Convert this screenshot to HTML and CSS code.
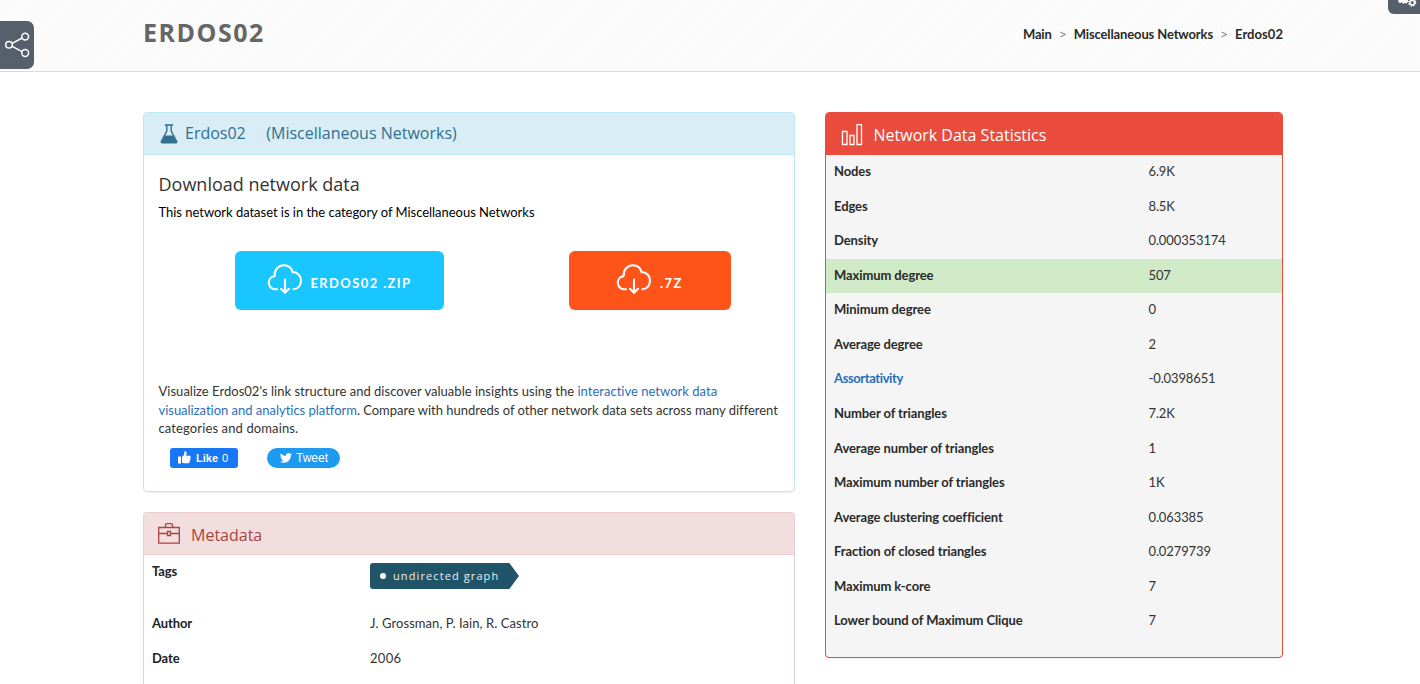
FILE: index.html
```
<!DOCTYPE html>
<html lang="en">
<head>
<meta charset="utf-8">
<title>Erdos02 | Miscellaneous Networks</title>
<link rel="stylesheet" href="styles.css">
</head>
<body>
<svg class="defs" width="0" height="0" aria-hidden="true">
  <symbol id="cloud" viewBox="0 0 36 32">
    <path d="M10 26.300H8.500C4.800 26.300 1.800 23.500 1.800 19.600C1.800 16 4.300 13.400 7.600 13.100C7.300 6.700 11.400 2.200 16.800 2.200C21.200 2.200 24.600 5 25.600 9.300C30.400 8.800 34 12.700 34 17.500C34 22.300 31.200 26.300 26.500 26.300" />
    <path d="M18 16.500V29M14 25.800L18 29.800L22 25.800" />
  </symbol>
</svg>

<header class="top">
  <div class="container top-row">
    <h1>ERDOS02</h1>
    <nav class="crumbs">
      <a>Main</a><i>&gt;</i><a>Miscellaneous Networks</a><i>&gt;</i><a class="here">Erdos02</a>
    </nav>
  </div>
</header>

<div class="share">
  <svg width="27" height="27" viewBox="0 0 27 27"><path d="M8.200 11.300L18.200 6M8.200 14.300L18.200 19.600"/><circle cx="5" cy="12.800" r="3.300"/><circle cx="21.200" cy="4.600" r="3.400"/><circle cx="21.200" cy="21" r="3.400"/></svg>
</div>
<div class="gear">
  <svg width="20" height="8" viewBox="0 0 20 8"><path class="fill" d="M0 0H10V1.500L8.500 3.800L7 2.800L5.500 4L3.800 2.300L2 3.300L.5 2Z"/><circle class="teeth" cx="14.200" cy="2.600" r="3.300"/><circle class="ring" cx="14.200" cy="2.600" r="2.300"/></svg>
</div>

<main class="container columns">
  <div class="left">
    <section class="card info">
      <h2 class="head">
        <svg width="18" height="20" viewBox="0 0 18 20"><path class="glass" d="M4.800 1H13.200M6.800 1V7L1.400 17.200Q.7 18.800 2.400 18.800H15.600Q17.300 18.800 16.600 17.200L11.200 7V1"/><path class="liquid" d="M4.800 11.500H13.200L17 18.700H1Z"/></svg>
        <span class="h-name">Erdos02</span><span class="h-cat">(Miscellaneous Networks)</span>
      </h2>
      <div class="body">
        <h3>Download network data</h3>
        <p class="lead">This network dataset is in the category of Miscellaneous Networks</p>
        <div class="buttons">
          <a class="btn zip"><svg width="36" height="32"><use href="#cloud"/></svg><span>ERDOS02 .ZIP</span></a>
          <a class="btn seven"><svg width="36" height="32"><use href="#cloud"/></svg><span>.7Z</span></a>
        </div>
        <div class="about">
          <div class="l1">Visualize Erdos02's link structure and discover valuable insights using the <a>interactive network data</a></div>
          <div class="l2"><a>visualization and analytics platform</a>. Compare with hundreds of other network data sets across many different</div>
          <div class="l3">categories and domains.</div>
        </div>
        <div class="social">
          <a class="like"><svg width="13" height="13" viewBox="0 0 13 13"><path d="M0 5.500H3V12.500H0ZM4 5.800C6 4.600 6.300 3 6.300 1.200C6.400-.2 8.600 0 8.600 2.200C8.600 3.300 8.300 4.200 8.100 4.800H11.500C12.800 4.800 13 6.300 12.200 6.900C12.900 7.500 12.800 8.500 12 8.900C12.400 9.600 12.200 10.400 11.400 10.700C11.600 11.800 11 12.300 10 12.300H7C5.500 12.300 4.800 11.800 4 11.500Z"/></svg><b>Like</b><span>0</span></a>
          <a class="tweet"><svg width="12" height="12" viewBox="0 0 24 24"><path d="M24 4.600a10 10 0 0 1-2.800.8 5 5 0 0 0 2.100-2.700 10 10 0 0 1-3.100 1.200 4.900 4.900 0 0 0-8.400 4.500A14 14 0 0 1 1.700 3.200a4.900 4.900 0 0 0 1.500 6.500A5 5 0 0 1 1 9.100a4.900 4.900 0 0 0 3.900 4.900 5 5 0 0 1-2.200.1 4.900 4.900 0 0 0 4.600 3.400A10 10 0 0 1 0 19.500 14 14 0 0 0 7.500 21.700c9.100 0 14.300-7.700 14-14.600A10 10 0 0 0 24 4.600z"/></svg><span>Tweet</span></a>
        </div>
      </div>
    </section>

    <section class="card meta">
      <h2 class="head">
        <svg width="22" height="21" viewBox="0 0 22 21"><path d="M.7 4.500H21.300V20.200H.7ZM7.500 4.300V1.700Q7.500.7 8.500.7H13.500Q14.500.7 14.500 1.700V4.300M.7 10.500H9.300M12.700 10.500H21.300M9.500 8.500H12.500V12.500H9.500Z"/></svg>
        <span>Metadata</span>
      </h2>
      <div class="mrow tags"><b>Tags</b><span class="tag">undirected graph</span></div>
      <div class="mrow"><b>Author</b><span class="author">J. Grossman, P. Iain, R. Castro</span></div>
      <div class="mrow"><b>Date</b><span class="year">2006</span></div>
    </section>
  </div>

  <section class="card stats">
    <h2 class="head">
      <svg width="22" height="22" viewBox="0 0 22 22"><path d="M1.500 7.500H6V20.500H1.500ZM9 11.500H13V20.500H9ZM16 .7H20.500V20.500H16Z"/></svg>
      <span>Network Data Statistics</span>
    </h2>
    <div class="row"><b>Nodes</b><span>6.9K</span></div>
    <div class="row"><b>Edges</b><span>8.5K</span></div>
    <div class="row"><b>Density</b><span>0.000353174</span></div>
    <div class="row on"><b>Maximum degree</b><span>507</span></div>
    <div class="row"><b>Minimum degree</b><span>0</span></div>
    <div class="row"><b>Average degree</b><span>2</span></div>
    <div class="row"><b class="link">Assortativity</b><span>-0.0398651</span></div>
    <div class="row"><b>Number of triangles</b><span>7.2K</span></div>
    <div class="row"><b>Average number of triangles</b><span>1</span></div>
    <div class="row"><b>Maximum number of triangles</b><span>1K</span></div>
    <div class="row"><b>Average clustering coefficient</b><span>0.063385</span></div>
    <div class="row"><b>Fraction of closed triangles</b><span>0.0279739</span></div>
    <div class="row"><b>Maximum k-core</b><span>7</span></div>
    <div class="row"><b>Lower bound of Maximum Clique</b><span>7</span></div>
  </section>
</main>
</body>
</html>
```
FILE: styles.css
```
* { box-sizing: border-box; }
html, body { height: 100%; overflow: hidden; }
body { margin: 0; background: #fff; color: #333; font-family: Lato, "Liberation Sans", sans-serif; font-size: 13px; line-height: 18.57px; }
svg { fill: none; flex: none; }
h1, h2, h3, p { margin: 0; font-family: "Open Sans", sans-serif; font-weight: 400; }
b { font-weight: 700; }
.defs { position: absolute; }
.container { width: 1140px; margin-left: 143px; }

.top { height: 72px; border-bottom: 1px solid #dcdcdc; background: repeating-linear-gradient(135deg, #fafafa 0 1.500px, #fcfcfc 1.500px 4px); }
.top-row { display: flex; justify-content: space-between; height: 68px; align-items: center; }
h1 { font-size: 25px; font-weight: 700; color: #666; letter-spacing: 1.500px; padding-bottom: 3px; }
.crumbs { display: flex; color: #2a2a2a; font-weight: 700; letter-spacing: -.13px; }
.crumbs .here { letter-spacing: .05px; }
.crumbs i { font-style: normal; font-weight: 400; font-size: 14px; color: #888; width: 22px; text-align: center; }

.share { position: absolute; left: 0; top: 21px; width: 34px; height: 48px; background: #575f6a; border-radius: 0 7px 7px 0; padding: 11px 0 0 4px; }
.share svg { stroke: #fff; stroke-width: 1.500; }
.gear { position: absolute; right: 0; top: 0; width: 32px; height: 14px; background: #575f6a; border-radius: 0 0 0 6px; padding-left: 10px; line-height: 0; }
.gear .fill { fill: #fff; }
.gear .teeth { stroke: #fff; stroke-width: 1.500; stroke-dasharray: 1.500 1.100; }
.gear .ring { stroke: #fff; stroke-width: 1.500; }

.columns { display: flex; gap: 30px; align-items: flex-start; padding-top: 40px; height: 612px; }
.left { width: 652px; height: 572px; display: flex; flex-direction: column; gap: 20px; }
.card { border: 1px solid; border-radius: 4px; box-shadow: 0 1px 1px rgba(0,0,0,.05); }
.head { display: flex; align-items: center; font-size: 16px; border-bottom: 1px solid; height: 42px; border-radius: 3px 3px 0 0; }
.info { border-color: #bce8f1; height: 380px; }
.info .head { background: #d9edf7; border-color: #bce8f1; color: #31708f; padding-left: 15.500px; }
.h-name { margin-left: 7.500px; }
.h-cat { margin-left: 20.500px; }
.glass { stroke: #31708f; stroke-width: 1.400; }
.liquid { fill: #31708f; }
.body { padding: 16px 15px 0 14.500px; }
h3 { font-size: 18px; line-height: 26px; }
.lead { font: 13px/18px Lato, sans-serif; color: #000; margin-top: 6px; letter-spacing: -.03px; }
.buttons { display: flex; padding: 30px 0 0 76.500px; gap: 125px; }
.btn { display: flex; height: 59px; border-radius: 6px; color: #fff; font-weight: 700; padding-top: 12px; }
.btn svg { stroke: #fff; stroke-width: 2.100; stroke-linecap: round; stroke-linejoin: round; }
.btn span { margin-left: 8px; padding-top: 11px; letter-spacing: 1.380px; }
.zip { width: 209px; background: #1ac6ff; padding-left: 31.500px; }
.seven { width: 162px; background: #ff5419; padding-left: 47px; }
.about { margin-top: 72px; white-space: nowrap; }
.about a { color: #2a6ebb; }
.l1 { letter-spacing: .020px; }
.l2 { letter-spacing: -.020px; }
.l3 { letter-spacing: .120px; }
.social { display: flex; padding: 10px 0 0 11.500px; gap: 29px; font: 12px/20px "Liberation Sans", Arial, sans-serif; color: #fff; }
.like { display: flex; align-items: center; width: 68px; height: 20px; background: #1877f2; border-radius: 3px; padding-left: 8px; font-size: 11px; }
.like svg, .tweet svg { fill: #fff; }
.like b { margin: 0 4px 0 5px; }
.tweet { display: flex; align-items: center; width: 73px; height: 20px; background: #1d9bf0; border-radius: 10px; padding-left: 13px; }
.tweet span { margin-left: 4px; }

.meta { border-color: #ebccd1; height: 172px; border-bottom: 0; border-radius: 4px 4px 0 0; box-shadow: none; }
.meta .head { background: #f2dede; border-color: #ebccd1; color: #a94442; padding: 0 0 0 14px; }
.meta .head svg { stroke: #a94442; stroke-width: 1.300; }
.meta .head span { margin-left: 11px; padding-top: 3px; }
.mrow { display: flex; padding: 7px 8px; height: 34.570px; }
.mrow b { width: 218px; color: #222; letter-spacing: -.1px; }
.tags { height: 52px; }
.tag { width: 149px; height: 26px; margin-top: 1px; background: #205468; border-radius: 3px 0 0 3px; clip-path: polygon(0 0, 93.500% 0, 100% 50%, 93.500% 100%, 0 100%); display: flex; align-items: center; gap: 7px; padding-left: 10px; color: #eee; font: 11px/20px "Open Sans", sans-serif; letter-spacing: 1.100px; }
.tag::before { content: ""; width: 6px; height: 6px; border-radius: 50%; background: #fff; }
.author { letter-spacing: .070px; }
.year { letter-spacing: .3px; }

.stats { width: 458px; height: 546px; border-color: #e74c3c; background: #f5f5f5; }
.stats .head { background: #e94c3d; border-color: #e94c3d; color: #fff; padding: 2px 0 0 14.500px; }
.stats .head svg { stroke: #fff; stroke-width: 1.300; }
.stats .head span { margin-left: 11px; padding-top: 2px; }
.row { display: flex; height: 34.570px; padding: 7px 8px; }
.row b { width: 314.500px; color: #2a2a2a; letter-spacing: -.1px; }
.row span { letter-spacing: -.12px; }
.row .link { color: #2a6ebb; letter-spacing: -.4px; }
.on { background: #d0e9c6; }
```
